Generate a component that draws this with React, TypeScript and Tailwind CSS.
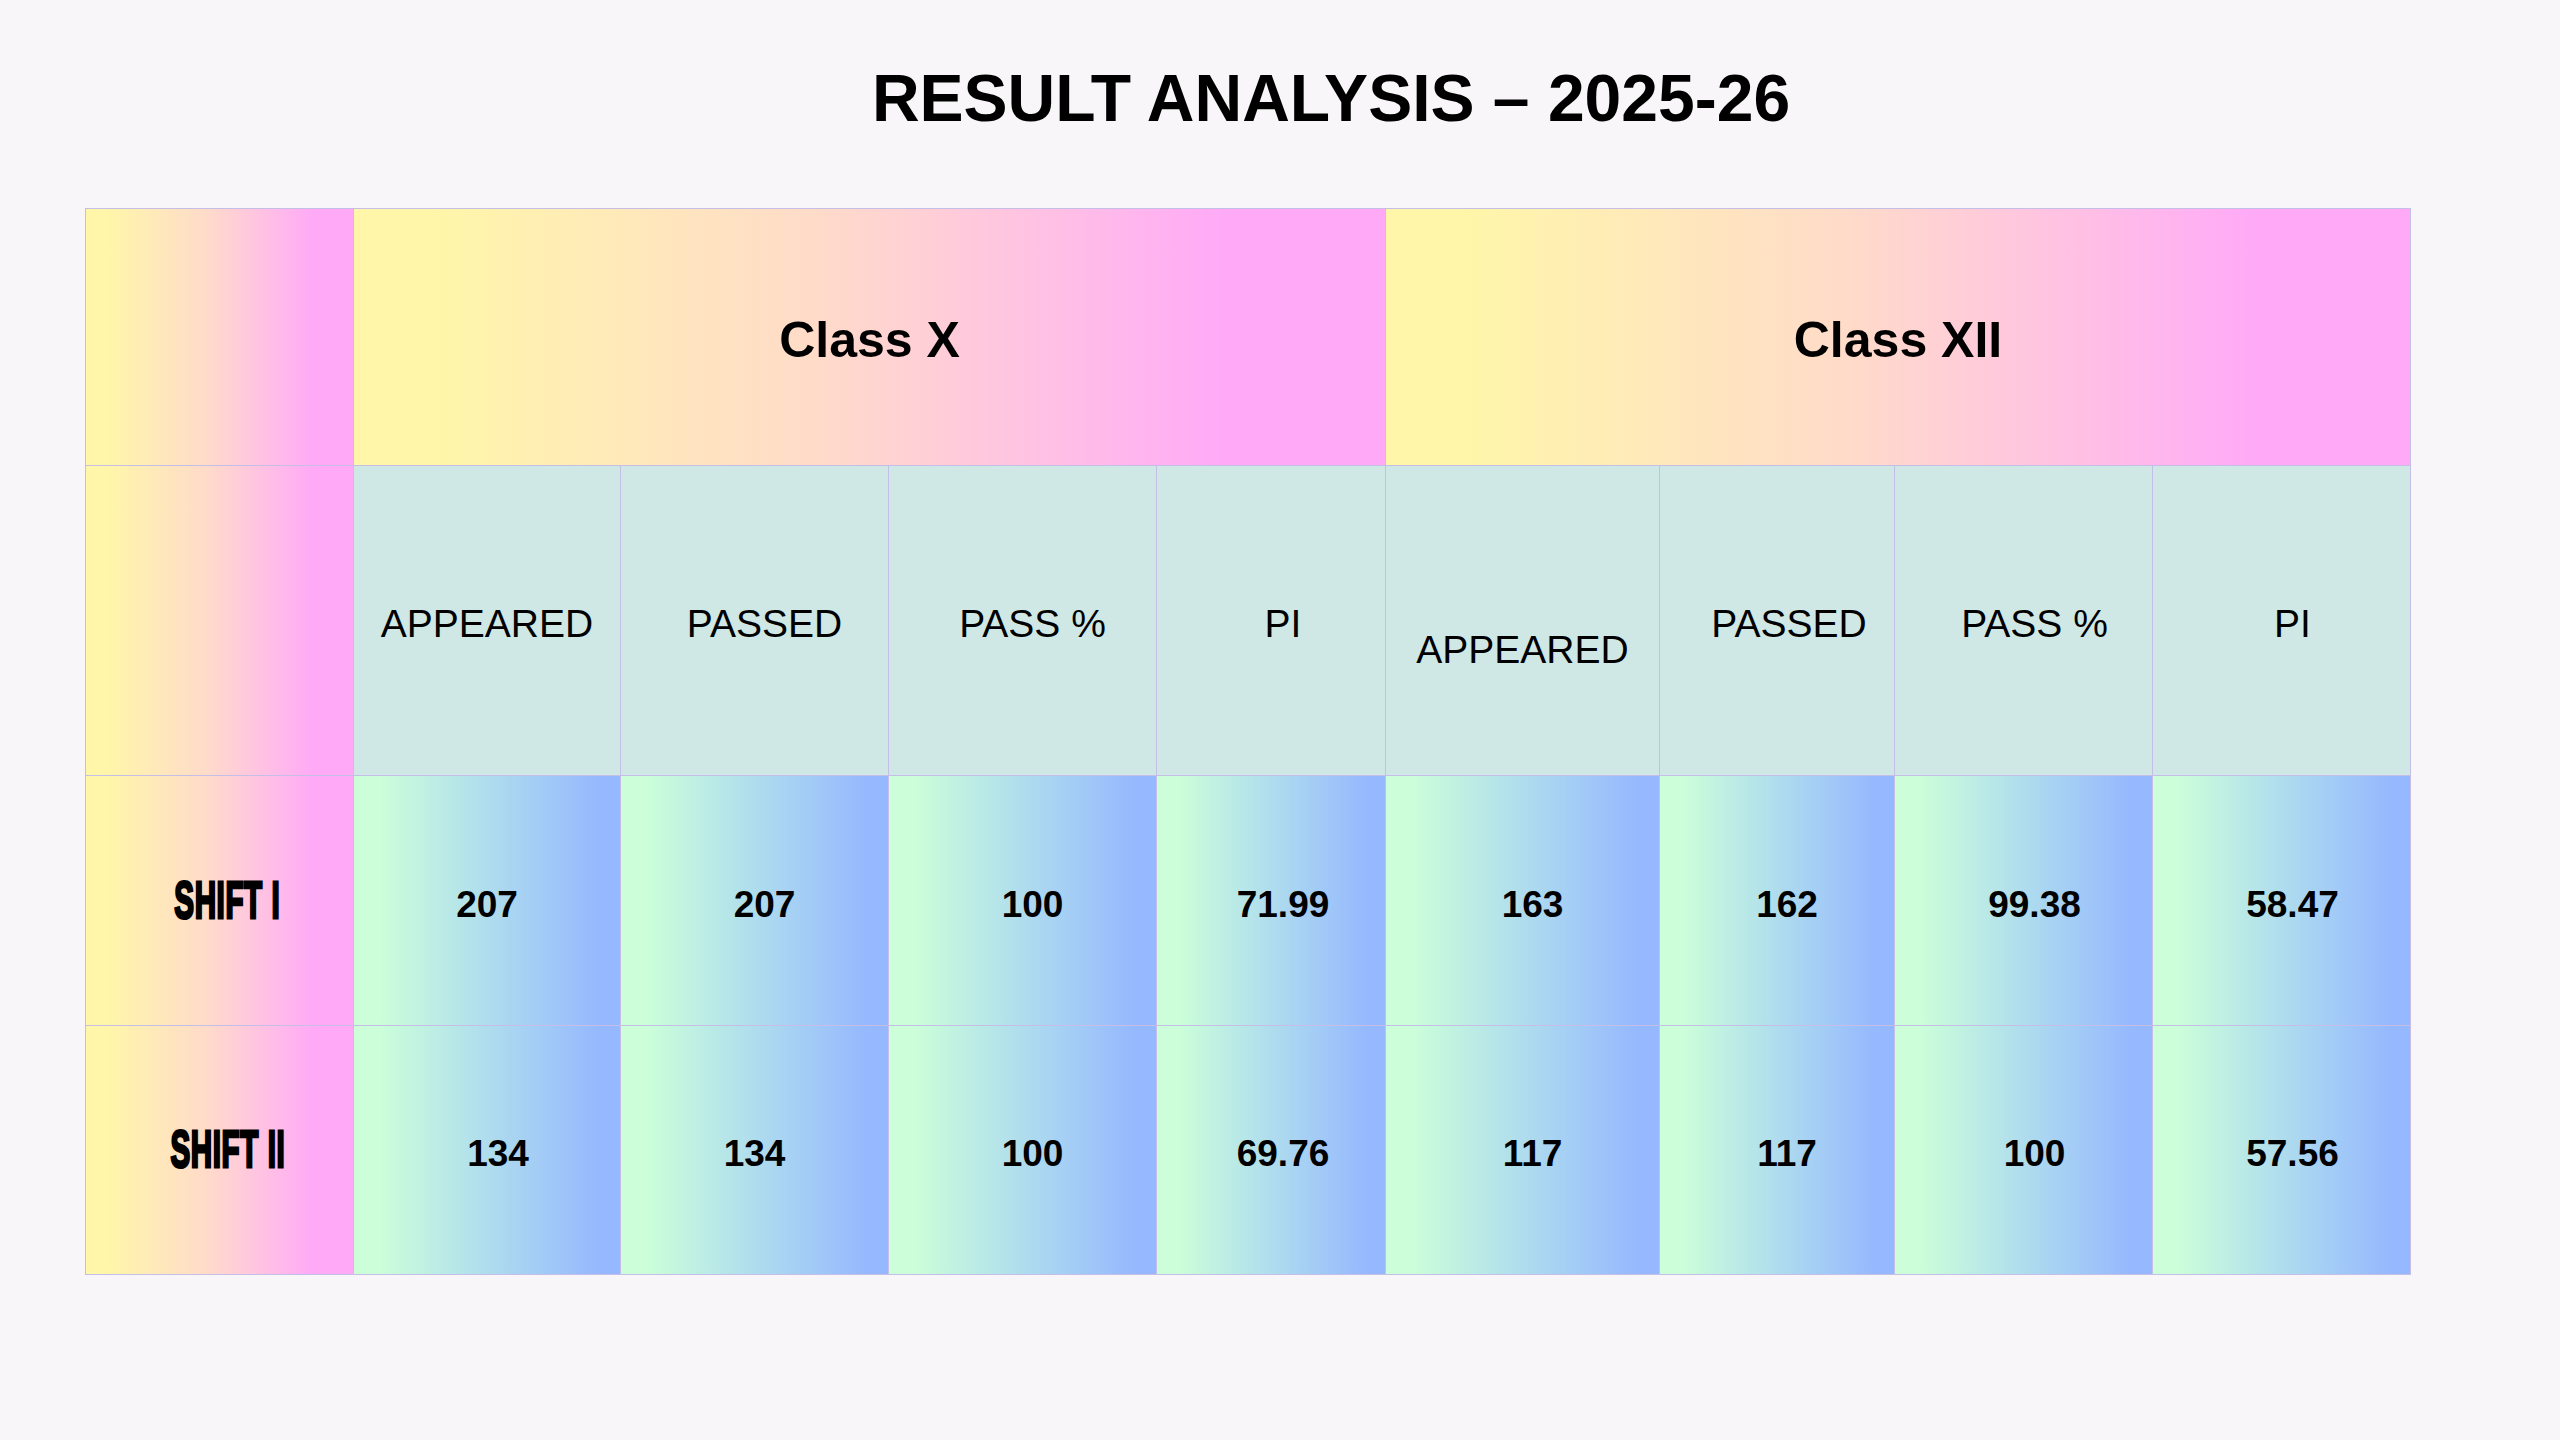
import React from "react";

type Cell = { text: string; pad: string };

const heads: Cell[] = [
  { text: "APPEARED", pad: "pt-2" },
  { text: "PASSED", pad: "pt-2 pl-5" },
  { text: "PASS %", pad: "pt-2 pl-5" },
  { text: "PI", pad: "pt-2 pl-6" },
  { text: "APPEARED", pad: "pt-[59px]" },
  { text: "PASSED", pad: "pt-2 pl-6" },
  { text: "PASS %", pad: "pt-2 pl-[22px]" },
  { text: "PI", pad: "pt-2 pl-[22px]" },
];

const rows: { label: string; cells: Cell[] }[] = [
  {
    label: "SHIFT I",
    cells: [
      { text: "207", pad: "pt-2" },
      { text: "207", pad: "pt-2 pl-5" },
      { text: "100", pad: "pt-2 pl-5" },
      { text: "71.99", pad: "pt-2 pl-6" },
      { text: "163", pad: "pt-2 pl-5" },
      { text: "162", pad: "pt-2 pl-5" },
      { text: "99.38", pad: "pt-2 pl-[22px]" },
      { text: "58.47", pad: "pt-2 pl-[22px]" },
    ],
  },
  {
    label: "SHIFT II",
    cells: [
      { text: "134", pad: "pt-2 pl-[22px]" },
      { text: "134", pad: "pt-2" },
      { text: "100", pad: "pt-2 pl-5" },
      { text: "69.76", pad: "pt-2 pl-6" },
      { text: "117", pad: "pt-2 pl-5" },
      { text: "117", pad: "pt-2 pl-5" },
      { text: "100", pad: "pt-2 pl-[22px]" },
      { text: "57.56", pad: "pt-2 pl-[22px]" },
    ],
  },
];

const line = "border-r border-b border-[#c5bfe8]";
const warm =
  "bg-linear-to-r from-[#fff6a9] from-8% via-[#ffdbc9] via-45% to-[#ffa9f7] to-85%";
const cool = "bg-linear-to-r from-[#cbfed9] from-10% to-[#96b8fe] to-92%";

export default function App() {
  return (
    <div className="min-h-screen bg-[#f8f6f8] font-['Liberation_Sans',Arial,sans-serif] text-black">
      <h1 className="pt-[61px] pl-[102px] text-center text-[66px] leading-[1.15] font-bold">
        RESULT ANALYSIS – 2025-26
      </h1>

      <div className="mt-[71px] ml-[85px] grid w-fit grid-cols-[268px_267px_268px_268px_229px_274px_235px_258px_258px] grid-rows-[257px_310px_250px_249px] border-t border-l border-[#c5bfe8]">
        {/* class headers */}
        <div className={`${line} ${warm}`} />
        <div className={`${line} ${warm} col-span-4 flex items-center justify-center pt-2 text-[50px] font-bold`}>
          Class X
        </div>
        <div className={`${line} ${warm} col-span-4 flex items-center justify-center pt-2 text-[50px] font-bold`}>
          Class XII
        </div>

        {/* column headers */}
        <div className={`${line} ${warm}`} />
        {heads.map((h, i) => (
          <div
            key={i}
            className={`${line} ${h.pad} flex items-center justify-center bg-[#cfe8e5] text-[39px]`}
          >
            {h.text}
          </div>
        ))}

        {/* shifts */}
        {rows.map((r) => (
          <React.Fragment key={r.label}>
            <div className={`${line} ${warm} flex items-center justify-center pl-4`}>
              <span className="inline-block scale-x-[0.58] text-[51px] leading-none font-bold tracking-[1px] [-webkit-text-stroke:3px_#000]">
                {r.label}
              </span>
            </div>
            {r.cells.map((c, i) => (
              <div
                key={i}
                className={`${line} ${cool} ${c.pad} flex items-center justify-center text-[37px] font-bold`}
              >
                {c.text}
              </div>
            ))}
          </React.Fragment>
        ))}
      </div>
    </div>
  );
}
